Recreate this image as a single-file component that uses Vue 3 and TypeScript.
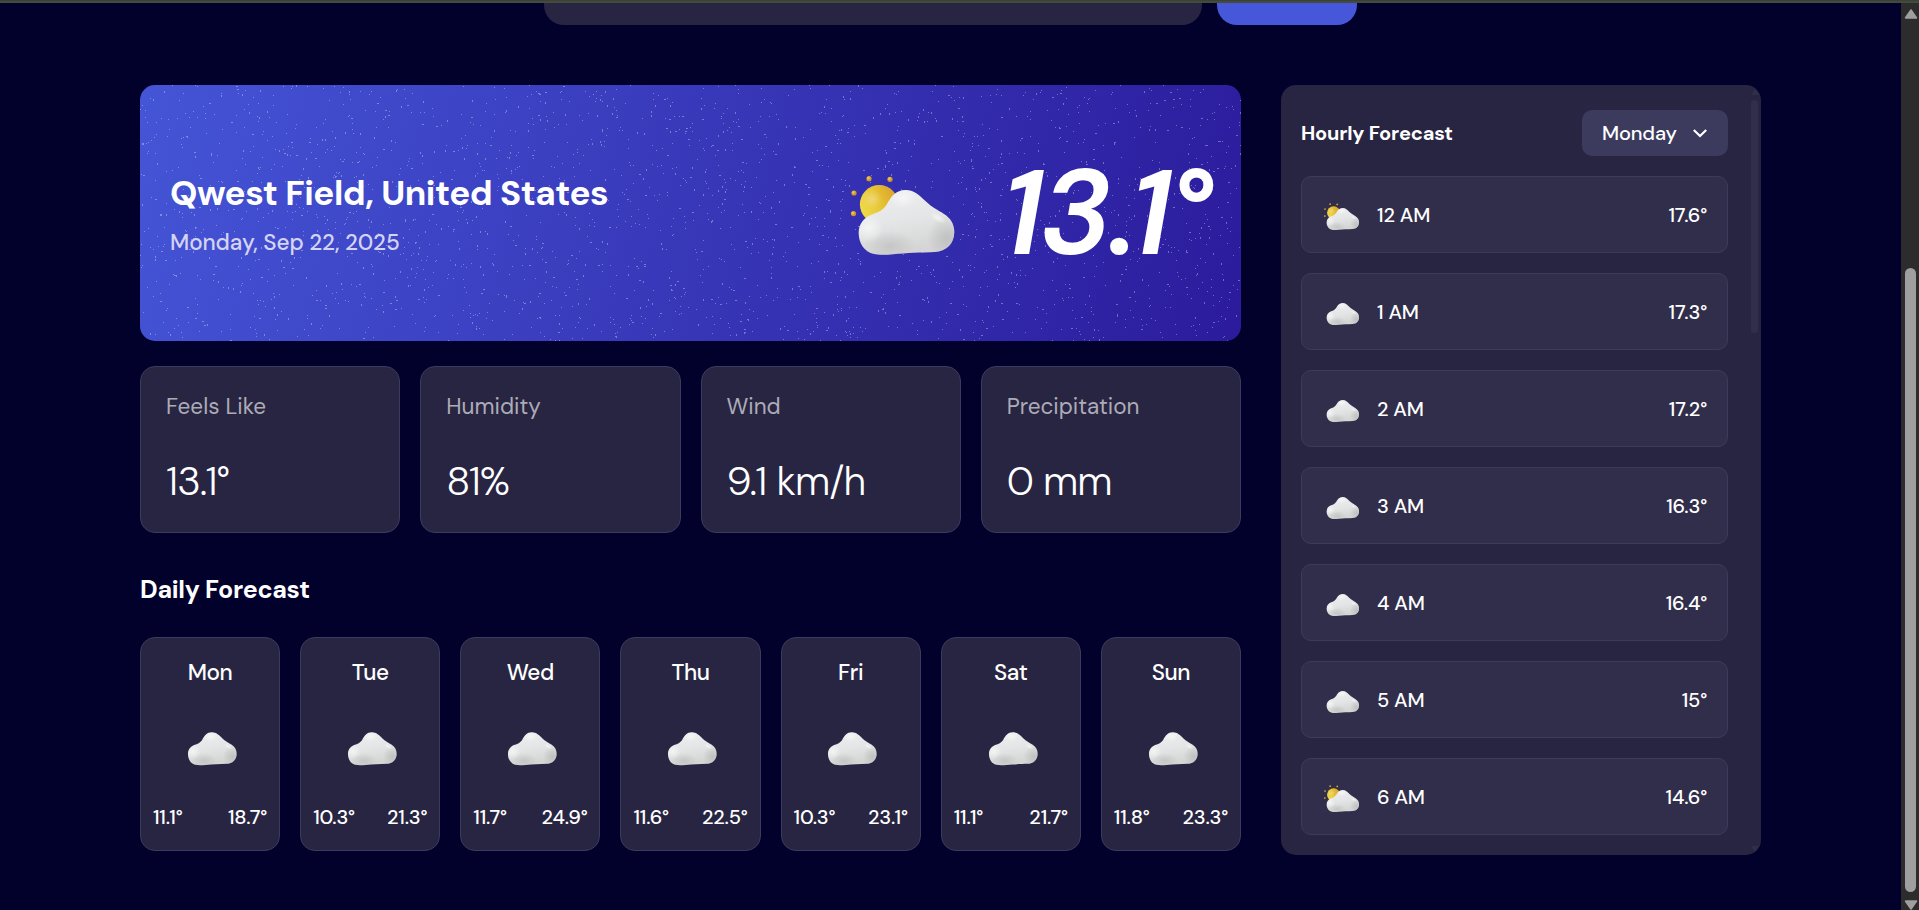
<script setup lang="ts">
interface Stat { label: string; value: string }
interface Day { name: string; min: string; max: string }
interface Hour { time: string; temp: string; sunny: boolean }

const stats: Stat[] = [
  { label: 'Feels Like', value: '13.1°' },
  { label: 'Humidity', value: '81%' },
  { label: 'Wind', value: '9.1 km/h' },
  { label: 'Precipitation', value: '0 mm' },
]

const days: Day[] = [
  { name: 'Mon', min: '11.1°', max: '18.7°' },
  { name: 'Tue', min: '10.3°', max: '21.3°' },
  { name: 'Wed', min: '11.7°', max: '24.9°' },
  { name: 'Thu', min: '11.6°', max: '22.5°' },
  { name: 'Fri', min: '10.3°', max: '23.1°' },
  { name: 'Sat', min: '11.1°', max: '21.7°' },
  { name: 'Sun', min: '11.8°', max: '23.3°' },
]

const hours: Hour[] = [
  { time: '12 AM', temp: '17.6°', sunny: true },
  { time: '1 AM', temp: '17.3°', sunny: false },
  { time: '2 AM', temp: '17.2°', sunny: false },
  { time: '3 AM', temp: '16.3°', sunny: false },
  { time: '4 AM', temp: '16.4°', sunny: false },
  { time: '5 AM', temp: '15°', sunny: false },
  { time: '6 AM', temp: '14.6°', sunny: true },
]

const cloud =
  'M13.7 63C13.7 54 19 47.5 27 44.5C34 42 38 40.5 42 34C46 26.5 51 20 60.5 20C70 20 75 26 81 31.5C87 37.5 93 40 99 44C105.5 48 109.3 54 109.3 62C109.3 74 101 81.5 90 82C78 82.5 60 83 48 84.2C40 85 33 85 29 84C19 82 13.7 73 13.7 63Z'

// Repeatable scatter of one-pixel specks over the banner.
function scatter(count: number, width: number, height: number): string {
  let seed = 20250922
  const next = () => {
    seed = (Math.imul(seed, 1664525) + 1013904223) >>> 0
    return seed / 4294967296
  }
  let d = ''
  for (let i = 0; i < count; i++) {
    const x = Math.floor(next() * width)
    const y = Math.floor(next() * height)
    const kind = next()
    const w = kind > 0.88 ? 2 : 1
    const h = kind < 0.16 ? 2 : 1
    d += `M${x} ${y}h${w}v${h}h-${w}z`
  }
  return d
}
const specks = scatter(2300, 1101, 256)
</script>

<template>
  <div class="window">
    <svg class="defs" width="0" height="0" aria-hidden="true">
      <defs>
        <linearGradient id="cloudBase" x1="0" y1="0" x2="0.25" y2="1">
          <stop offset="0" stop-color="#f0f0f1" />
          <stop offset="0.55" stop-color="#e4e5e6" />
          <stop offset="1" stop-color="#d4d5d4" />
        </linearGradient>
        <radialGradient id="cloudShadeA">
          <stop offset="0" stop-color="#bdbebd" stop-opacity="0.7" />
          <stop offset="1" stop-color="#bdbebd" stop-opacity="0" />
        </radialGradient>
        <radialGradient id="cloudShadeB">
          <stop offset="0" stop-color="#b8b9b9" stop-opacity="0.75" />
          <stop offset="1" stop-color="#b8b9b9" stop-opacity="0" />
        </radialGradient>
        <radialGradient id="cloudLight">
          <stop offset="0" stop-color="#f8f8f8" stop-opacity="0.8" />
          <stop offset="1" stop-color="#f8f8f8" stop-opacity="0" />
        </radialGradient>
        <linearGradient id="sunFill" x1="0" y1="0.7" x2="1" y2="0.2">
          <stop offset="0" stop-color="#f0dc4a" />
          <stop offset="0.5" stop-color="#e6c534" />
          <stop offset="1" stop-color="#d99e2c" />
        </linearGradient>
        <radialGradient id="sunGlow">
          <stop offset="0" stop-color="#f2dc8c" stop-opacity="0.7" />
          <stop offset="1" stop-color="#f2dc8c" stop-opacity="0" />
        </radialGradient>
        <radialGradient id="sunDot" cx="0.35" cy="0.35">
          <stop offset="0" stop-color="#f2cf5a" />
          <stop offset="1" stop-color="#cf9524" />
        </radialGradient>
        <clipPath id="cloudClip"><path :d="cloud" /></clipPath>
        <g id="cloudArt">
          <path :d="cloud" fill="url(#cloudBase)" />
          <g clip-path="url(#cloudClip)">
            <ellipse cx="45" cy="76" rx="26" ry="15" fill="url(#cloudShadeA)" />
            <ellipse cx="102" cy="68" rx="20" ry="22" fill="url(#cloudShadeB)" />
            <ellipse cx="23" cy="58" rx="16" ry="15" fill="url(#cloudLight)" />
            <ellipse cx="58" cy="28" rx="13" ry="10" fill="url(#cloudLight)" />
            <ellipse cx="93" cy="48" rx="9" ry="4" transform="rotate(30 93 48)" fill="url(#cloudLight)" />
          </g>
        </g>
        <g id="sunArt">
          <circle cx="34.2" cy="34.3" r="19.3" fill="url(#sunFill)" />
          <circle cx="27" cy="29" r="10" fill="url(#sunGlow)" />
          <circle cx="24" cy="8.7" r="2.6" fill="url(#sunDot)" />
          <circle cx="45" cy="9.3" r="2.6" fill="url(#sunDot)" />
          <circle cx="9" cy="23" r="2.6" fill="url(#sunDot)" />
          <circle cx="8.5" cy="43.6" r="2.6" fill="url(#sunDot)" />
        </g>
      </defs>
    </svg>

    <div class="edge"></div>
    <div class="viewport">
      <main class="page">
        <div class="search">
          <div class="search-field"></div>
          <div class="search-button"></div>
        </div>

        <div class="layout">
          <div class="left">
            <section class="hero">
              <svg class="specks" width="1101" height="256" shape-rendering="crispEdges">
                <path :d="specks" fill="#fff" fill-opacity="0.33" />
              </svg>
              <div class="place">
                <h2 class="city">Qwest Field, United States</h2>
                <p class="date">Monday, Sep 22, 2025</p>
              </div>
              <svg class="hero-icon" viewBox="0 0 115 90">
                <use href="#sunArt" />
                <use href="#cloudArt" />
              </svg>
              <div class="hero-temp">13.1°</div>
            </section>

            <section class="stats">
              <div v-for="s in stats" :key="s.label" class="stat">
                <div class="stat-label">{{ s.label }}</div>
                <div class="stat-value">{{ s.value }}</div>
              </div>
            </section>

            <h3 class="daily-title">Daily Forecast</h3>
            <section class="daily">
              <div v-for="d in days" :key="d.name" class="day">
                <div class="day-name">{{ d.name }}</div>
                <svg class="day-icon" viewBox="0 0 115 90"><use href="#cloudArt" /></svg>
                <div class="day-temps">
                  <span>{{ d.min }}</span>
                  <span>{{ d.max }}</span>
                </div>
              </div>
            </section>
          </div>

          <aside class="hourly">
            <div class="hourly-body">
              <div class="hourly-head">
                <h3 class="hourly-title">Hourly Forecast</h3>
                <button class="select" type="button">
                  <span>Monday</span>
                  <svg width="16" height="12" viewBox="0 0 16 12">
                    <path d="M1.8 3L8 9L14.2 3" fill="none" stroke="#fff" stroke-width="2.2" />
                  </svg>
                </button>
              </div>
              <div v-for="h in hours" :key="h.time" class="hour">
                <svg class="hour-icon" :class="{ plain: !h.sunny }" viewBox="0 0 115 90">
                  <use v-if="h.sunny" href="#sunArt" />
                  <use href="#cloudArt" />
                </svg>
                <span class="hour-time">{{ h.time }}</span>
                <span class="hour-temp">{{ h.temp }}</span>
              </div>
            </div>
            <div class="inner-bar">
              <svg width="8" height="6" viewBox="0 0 8 6"><path d="M4 0L8 6H0Z" fill="#302f4a" /></svg>
              <div class="inner-thumb"></div>
              <svg class="last" width="8" height="6" viewBox="0 0 8 6"><path d="M4 6L8 0H0Z" fill="#302f4a" /></svg>
            </div>
          </aside>
        </div>
      </main>

      <div class="scrollbar">
        <svg width="14" height="10" viewBox="0 0 14 10">
          <path d="M7 1.2L12.2 8.8H1.8Z" fill="#9f9f9f" stroke="#9f9f9f" stroke-width="2" stroke-linejoin="round" />
        </svg>
        <div class="thumb"></div>
        <svg class="last" width="14" height="10" viewBox="0 0 14 10">
          <path d="M7 8.8L12.2 1.2H1.8Z" fill="#9f9f9f" stroke="#9f9f9f" stroke-width="2" stroke-linejoin="round" />
        </svg>
      </div>
    </div>
  </div>
</template>

<style>
html,
body {
  margin: 0;
  background: #02012c;
  overflow: hidden;
}
</style>

<style scoped>
* { box-sizing: border-box; }
h2, h3, p { margin: 0; }
.window {
  width: 1919px;
  height: 910px;
  overflow: hidden;
  background: #02012c;
  color: #fff;
  font-family: "DM Sans", Inter, sans-serif;
  white-space: nowrap;
}
.defs { position: absolute; }
.edge { height: 3px; background: #38442f; border-bottom: 2px solid #444a40; }
.viewport { display: flex; height: 907px; }
.page { width: 1901px; padding: 0 140px; }
.search { display: flex; justify-content: center; gap: 15px; height: 22px; }
.search-field { width: 658px; border-radius: 0 0 20px 20px; background: #282542; }
.search-button { width: 140px; border-radius: 0 0 20px 20px; background: #4658d9; }
.layout { display: flex; gap: 40px; margin-top: 60px; }
.left { width: 1101px; }

.hero {
  position: relative;
  display: flex;
  align-items: center;
  height: 256px;
  padding: 0 30px;
  border-radius: 15px;
  overflow: hidden;
  background: linear-gradient(105deg, #4455d6 0%, #2b1b9c 100%);
}
.specks { position: absolute; left: 0; top: 0; }
.place { position: relative; flex: 1; padding-top: 2px; }
.city { font-size: 35px; line-height: 46px; font-weight: 700; letter-spacing: -0.47px; }
.date {
  margin-top: 12px;
  font-size: 22.5px;
  line-height: 30px;
  font-weight: 500;
  letter-spacing: -0.1px;
  color: #d4d3f3;
}
.hero-icon { position: relative; width: 115px; height: 90px; margin-top: 4px; }
.hero-temp {
  position: relative;
  width: 210px;
  margin-left: 41px;
  font-size: 120px;
  line-height: 140px;
  font-weight: 600;
  font-style: italic;
  letter-spacing: -3px;
}

.stats { display: grid; grid-template-columns: repeat(4, 1fr); gap: 20px; margin-top: 25px; }
.stat {
  height: 167px;
  padding: 25px 25px 0;
  border: 1px solid #3c3b5e;
  border-radius: 15px;
  background: #282542;
}
.stat-label { font-size: 22.5px; line-height: 30px; color: #acacb7; font-weight: 400; }
.stat-value { margin-top: 34px; font-size: 40px; line-height: 50px; font-weight: 300; letter-spacing: -0.95px; }

.daily-title {
  margin-top: 42px;
  font-size: 25px;
  line-height: 30px;
  font-weight: 700;
  letter-spacing: -0.3px;
}
.daily { display: grid; grid-template-columns: repeat(7, 1fr); gap: 20px; margin-top: 32px; }
.day {
  height: 214px;
  padding: 20px 12px 0;
  border: 1px solid #3c3b5e;
  border-radius: 15px;
  background: #282542;
  display: flex;
  flex-direction: column;
  align-items: center;
}
.day-name { font-size: 22.5px; line-height: 30px; font-weight: 500; letter-spacing: -0.4px; }
.day-icon { width: 58.5px; height: 46px; margin-top: 34px; }
.day-temps {
  display: flex;
  justify-content: space-between;
  align-self: stretch;
  margin-top: 36px;
  font-size: 20px;
  line-height: 26px;
  font-weight: 500;
  letter-spacing: -0.2px;
}

.hourly {
  display: flex;
  width: 480px;
  height: 770px;
  border-radius: 15px;
  overflow: hidden;
  background: #282542;
}
.hourly-body { width: 467px; padding: 25px 20px 20px; display: flex; flex-direction: column; gap: 20px; }
.hourly-head { display: flex; justify-content: space-between; align-items: center; height: 46px; }
.hourly-title { font-size: 20px; font-weight: 700; letter-spacing: -0.2px; }
.select {
  display: flex;
  align-items: center;
  justify-content: space-between;
  width: 146px;
  height: 46px;
  padding: 0 20px;
  border: 0;
  border-radius: 10px;
  background: #3c3b5e;
  color: #fff;
  font: 500 20px "DM Sans", Inter, sans-serif;
  letter-spacing: -0.15px;
}
.hour {
  display: flex;
  align-items: center;
  flex: none;
  height: 77px;
  padding: 0 20px;
  border: 1px solid #3c3b5e;
  border-radius: 10px;
  background: #312e4b;
  font-size: 20px;
  font-weight: 500;
  letter-spacing: -0.15px;
}
.hour-icon { width: 39px; height: 31px; margin-top: 3px; }
.hour-icon.plain { margin-top: -1px; }
.hour-time { flex: 1; margin-left: 16px; }

.inner-bar { display: flex; flex-direction: column; align-items: center; width: 13px; padding: 4px 0 3px; }
.inner-thumb { width: 7px; height: 233px; margin-top: 5px; border-radius: 4px; background: #302f4a; }
.last { margin-top: auto; }

.scrollbar {
  display: flex;
  flex-direction: column;
  align-items: center;
  width: 18px;
  padding-top: 6px;
  padding-left: 1px;
  background: #2c2c2c;
}
.scrollbar svg { flex: none; }
.thumb { width: 11px; height: 624px; margin-top: 249px; border-radius: 6px; background: #9f9f9f; }
</style>
